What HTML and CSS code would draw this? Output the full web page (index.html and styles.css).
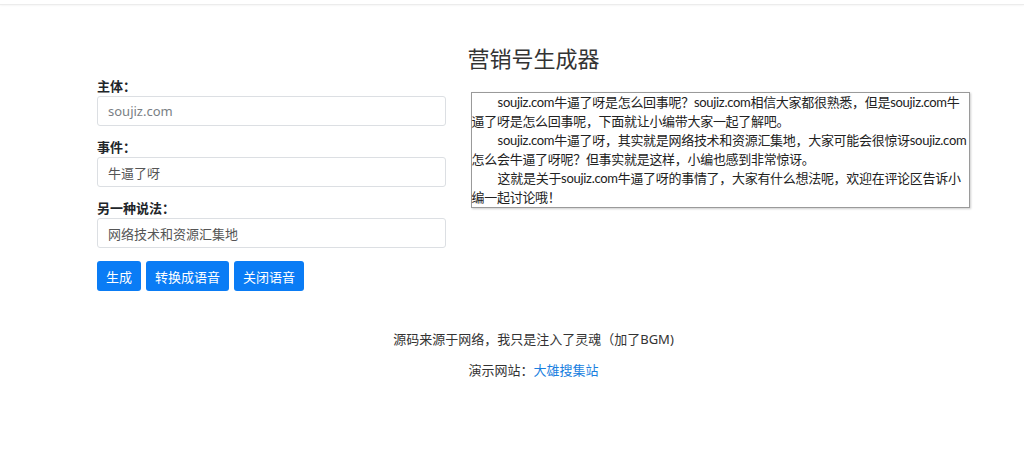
FILE: index.html
```html
<!DOCTYPE html>
<html lang="zh-CN">
<head>
	<meta charset="UTF-8">
	<meta name="viewport" content="width=device-width, initial-scale=1.0" />
	<title>营销号生成器</title>
	<link rel="stylesheet" href="styles.css">
</head>
<body>
	<div class="topbar"></div>

	<div class="container">
		<h2 class="title">营销号生成器</h2>

		<div class="main">
			<form class="form">
				<div class="form-group">
					<label for="subject">主体：</label>
					<input id="subject" class="form-control" type="text" placeholder="soujiz.com">
				</div>
				<div class="form-group">
					<label for="event">事件：</label>
					<input id="event" class="form-control" type="text" value="牛逼了呀">
				</div>
				<div class="form-group">
					<label for="other">另一种说法：</label>
					<input id="other" class="form-control" type="text" value="网络技术和资源汇集地">
				</div>
				<div class="btns">
					<button type="button" class="btn">生成</button>
					<button type="button" class="btn">转换成语音</button>
					<button type="button" class="btn">关闭语音</button>
				</div>
			</form>

			<div class="result">
				<p>soujiz.com牛逼了呀是怎么回事呢？soujiz.com相信大家都很熟悉，但是soujiz.com牛逼了呀是怎么回事呢，下面就让小编带大家一起了解吧。</p>
				<p>soujiz.com牛逼了呀，其实就是网络技术和资源汇集地，大家可能会很惊讶soujiz.com怎么会牛逼了呀呢？但事实就是这样，小编也感到非常惊讶。</p>
				<p>这就是关于soujiz.com牛逼了呀的事情了，大家有什么想法呢，欢迎在评论区告诉小编一起讨论哦！</p>
			</div>
		</div>

		<div class="footer">
			<p>源码来源于网络，我只是注入了灵魂（加了BGM)</p>
			<p>演示网站：<a href="#">大雄搜集站</a></p>
		</div>
	</div>
</body>
</html>
```

FILE: styles.css
```css
body{
	margin:0;
	background:#fff;
	color:#212529;
	font-family:"Noto Sans", "Noto Sans CJK SC", sans-serif;
	font-size:13px;
}
.topbar{
	height:4px;
	border-bottom:1px solid #ececec;
	box-shadow:0 1px 2px rgba(0,0,0,.04);
}
.container{
	width:873px;
	margin-left:97px;
}
.title{
	margin:38px 0 4px;
	font-size:22px;
	line-height:30px;
	font-weight:normal;
	text-align:center;
	color:#333;
}
.main{
	display:flex;
	gap:25px;
	align-items:flex-start;
}
.form{
	width:349px;
	margin:0;
}
.form-group{
	margin-bottom:12px;
}
.form-group label{
	display:block;
	font-weight:bold;
	line-height:18px;
	margin-bottom:1px;
	color:#212529;
}
.form-control{
	display:block;
	box-sizing:border-box;
	width:100%;
	height:30px;
	padding:0 10px;
	border:1px solid #dcdfe3;
	border-radius:3px;
	font:inherit;
	color:#555;
	background:#fff;
}
.form-control::placeholder{
	color:#7a7f85;
}
.btns{
	display:flex;
	gap:5px;
	margin-top:13px;
}
.btn{
	height:30px;
	padding:0 9px;
	border:0;
	border-radius:3px;
	background:#0a7cf5;
	color:#fff;
	font:inherit;
	font-size:13px;
}
.result{
	box-sizing:border-box;
	width:500px;
	margin-top:15px;
	padding:0;
	border:1px solid #9a9a9a;
	box-shadow:1px 1px 2px rgba(0,0,0,.2);
	font-family:Lato, "Noto Sans CJK SC", sans-serif;
	line-height:19px;
	letter-spacing:-0.3px;
	color:#222;
}
.result p{
	margin:0;
	text-indent:2em;
}
.footer{
	margin-top:39px;
	text-align:center;
	color:#333;
}
.footer p{
	margin:0 0 12px;
	line-height:19px;
}
.footer a{
	color:#1a7fe0;
	text-decoration:none;
}
```
